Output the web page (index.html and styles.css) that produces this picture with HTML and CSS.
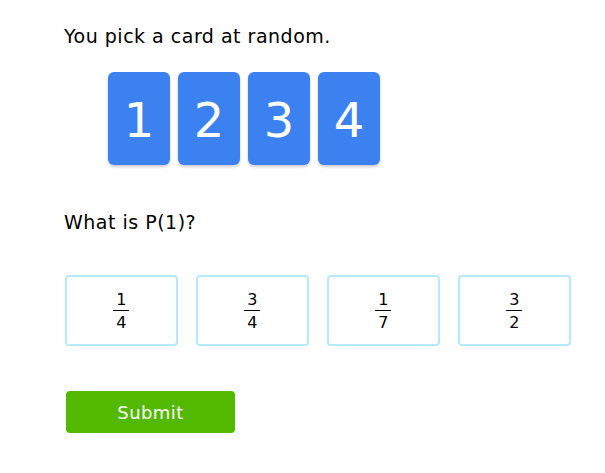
FILE: index.html
```html
<!DOCTYPE html>
<html lang="en">
<head>
    <meta charset="UTF-8">
    <title>Pick a card</title>
    <link rel="stylesheet" href="styles.css">
</head>
<body>
    <div class="question">
        <p class="prompt">You pick a card at random.</p>

        <div class="cards">
            <div class="card">1</div>
            <div class="card">2</div>
            <div class="card">3</div>
            <div class="card">4</div>
        </div>

        <p class="prompt ask">What is P(1)?</p>

        <div class="choices">
            <div class="choice"><span class="frac"><span class="num">1</span><span class="den">4</span></span></div>
            <div class="choice"><span class="frac"><span class="num">3</span><span class="den">4</span></span></div>
            <div class="choice"><span class="frac"><span class="num">1</span><span class="den">7</span></span></div>
            <div class="choice"><span class="frac"><span class="num">3</span><span class="den">2</span></span></div>
        </div>

        <button class="submit">Submit</button>
    </div>
</body>
</html>
```

FILE: styles.css
```css
body {
    margin: 0;
    font-family: "DejaVu Sans", Verdana, sans-serif;
    color: #000;
    background: #fff;
}
.question {
    padding: 25px 0 0 64px;
}
.prompt {
    margin: 0;
    font-size: 19px;
    line-height: 23px;
    letter-spacing: 0.5px;
}
.cards {
    display: flex;
    gap: 8px;
    margin: 24px 0 0 44px;
}
.card {
    width: 62px;
    height: 93px;
    background: #3b82f0;
    border-radius: 6px;
    box-shadow: 0 2px 3px rgba(0,0,0,0.2);
    color: white;
    font-size: 48px;
    padding-top: 2px;
    box-sizing: border-box;
    display: flex;
    align-items: center;
    justify-content: center;
}
.ask {
    margin-top: 46px;
}
.choices {
    display: flex;
    gap: 18.5px;
    margin: 41px 0 0 1px;
}
.choice {
    width: 108.5px;
    height: 67px;
    border: 2px solid #b5e9fc;
    border-radius: 4px;
    display: flex;
    align-items: center;
    justify-content: center;
}
.frac {
    display: inline-flex;
    flex-direction: column;
    align-items: center;
    font-size: 16px;
    line-height: 17px;
}
.num {
    padding: 0 3px 2px;
    border-bottom: 1px solid #000;
}
.den {
    padding-top: 3px;
}
.submit {
    display: block;
    margin: 45px 0 0 2px;
    width: 169px;
    height: 42px;
    background: #52b800;
    color: white;
    border: none;
    border-radius: 4px;
    font-family: inherit;
    font-size: 18px;
    letter-spacing: 0.4px;
}
```
